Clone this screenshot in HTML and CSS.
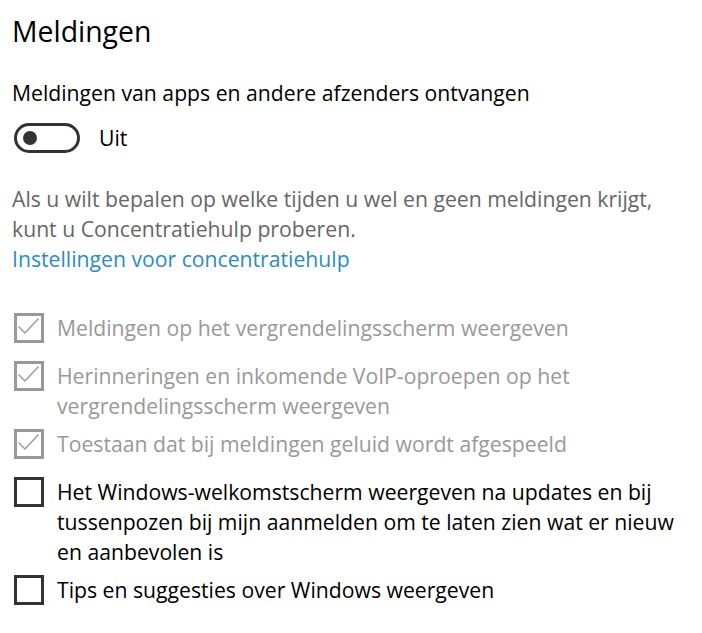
FILE: index.html
```html
<!DOCTYPE html>
<html lang="nl">
<head>
    <meta charset="UTF-8">
    <meta name="viewport" content="width=device-width, initial-scale=1.0">
    <title>Meldingen</title>
    <link rel="stylesheet" href="styles.css">
</head>
<body>
    <main class="settings-page">
        <h1 class="page-title">Meldingen</h1>

        <section class="setting">
            <p class="setting-label">Meldingen van apps en andere afzenders ontvangen</p>
            <div class="toggle-row">
                <span class="toggle"><span class="toggle-knob"></span></span>
                <span class="toggle-state">Uit</span>
            </div>
        </section>

        <p class="hint">Als u wilt bepalen op welke tijden u wel en geen meldingen krijgt, kunt u Concentratiehulp proberen.</p>
        <a class="hint-link" href="#">Instellingen voor concentratiehulp</a>

        <ul class="check-list">
            <li class="check-item is-disabled">
                <span class="check-box">
                    <svg viewBox="0 0 24 24" width="24" height="24"><path d="M1.5 10.5 L8 17 L21.5 2.5" /></svg>
                </span>
                <span class="check-label">Meldingen op het vergrendelingsscherm weergeven</span>
            </li>
            <li class="check-item is-disabled">
                <span class="check-box">
                    <svg viewBox="0 0 24 24" width="24" height="24"><path d="M1.5 10.5 L8 17 L21.5 2.5" /></svg>
                </span>
                <span class="check-label">Herinneringen en inkomende VoIP-oproepen op het vergrendelingsscherm weergeven</span>
            </li>
            <li class="check-item is-disabled">
                <span class="check-box">
                    <svg viewBox="0 0 24 24" width="24" height="24"><path d="M1.5 10.5 L8 17 L21.5 2.5" /></svg>
                </span>
                <span class="check-label">Toestaan dat bij meldingen geluid wordt afgespeeld</span>
            </li>
            <li class="check-item">
                <span class="check-box"></span>
                <span class="check-label">Het Windows-welkomstscherm weergeven na updates en bij tussenpozen bij mijn aanmelden om te laten zien wat er nieuw en aanbevolen is</span>
            </li>
            <li class="check-item">
                <span class="check-box"></span>
                <span class="check-label">Tips en suggesties over Windows weergeven</span>
            </li>
        </ul>
    </main>
</body>
</html>
```
FILE: styles.css
```css
body {
    margin: 0;
    background-color: #fff;
    font-family: "Open Sans", "Noto Sans", sans-serif;
    font-size: 21.2px;
    line-height: 30px;
    color: #000;
}

.settings-page {
    padding: 11px 14px 0 12px;
}

.page-title {
    margin: 0;
    font-size: 28.4px;
    font-weight: 400;
    line-height: 40px;
    color: #000;
}

.setting {
    margin-top: 27px;
}

.setting-label {
    margin: 0;
}

.toggle-row {
    display: flex;
    align-items: center;
    gap: 19px;
    margin-top: 15px;
    padding-left: 2px;
}

.toggle {
    display: flex;
    align-items: center;
    box-sizing: border-box;
    width: 66px;
    height: 30px;
    padding-left: 6px;
    border: 3px solid #333;
    border-radius: 15px;
}

.toggle-knob {
    width: 14px;
    height: 14px;
    border-radius: 50%;
    background-color: #333;
}

.toggle-state {
    color: #000;
}

.hint {
    margin: 31px 0 0;
    color: #666;
}

.hint-link {
    display: block;
    color: #2b8cc4;
    text-decoration: none;
}

.check-list {
    list-style: none;
    margin: 39px 0 0;
    padding: 0;
}

.check-item {
    display: flex;
    align-items: flex-start;
    gap: 13px;
    min-height: 40px;
    padding: 0 0 8px 2px;
}

.check-box {
    flex: none;
    display: flex;
    align-items: center;
    justify-content: center;
    box-sizing: border-box;
    width: 30px;
    height: 30px;
    border: 3px solid #333;
}

.check-box svg {
    fill: none;
    stroke: #999;
    stroke-width: 1.4;
}

.check-label {
    flex: 1;
}

.is-disabled .check-box {
    border-color: #999;
}

.is-disabled .check-label {
    color: #999;
}
```
